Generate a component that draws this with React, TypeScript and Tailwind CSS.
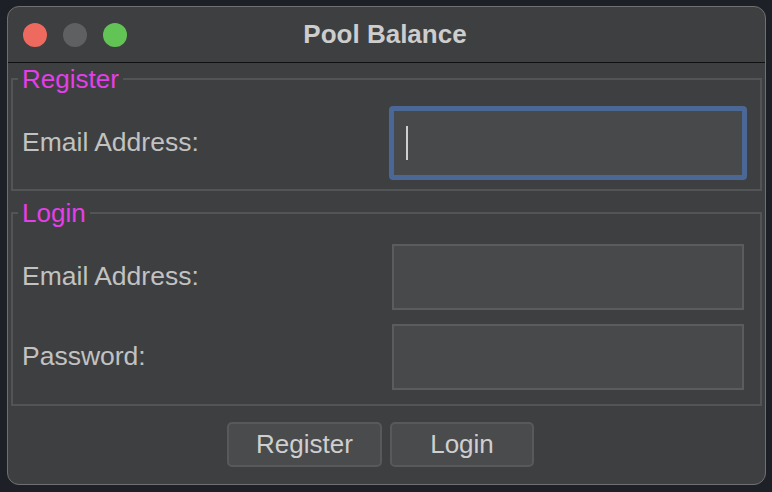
import React from 'react';

const font = { fontFamily: '"Liberation Sans", Arial, sans-serif' };

function TrafficLights() {
    return (
        <div className="flex items-center gap-[16px] pl-[15px]">
            <span className="block h-[24px] w-[24px] rounded-full bg-[#ee6a5e]" />
            <span className="block h-[24px] w-[24px] rounded-full bg-[#5f6062]" />
            <span className="block h-[24px] w-[24px] rounded-full bg-[#62c454]" />
        </div>
    );
}

function Field({ focused = false }: { focused?: boolean }) {
    if (focused) {
        return (
            <div className="flex h-[74px] w-[358px] items-center rounded-[4px] border-[5px] border-[#4a6795] bg-[#48494b] pl-[12px]">
                <span className="block h-[34px] w-[2px] bg-[#cfcfcf]" />
            </div>
        );
    }
    return <div className="h-[66px] w-[352px] border-2 border-[#5b5c5e] bg-[#48494b]" />;
}

export default function App() {
    return (
        <div className="h-[492px] w-[772px] bg-[#1d2026] pl-[7px] pt-[6px]" style={font}>
            <div className="flex h-[479px] w-[759px] flex-col overflow-hidden rounded-[12px] border border-[#707072] bg-[#3e3f41]">
                {/* title bar */}
                <div className="relative flex h-[56px] shrink-0 items-center border-b border-[#101010]">
                    <TrafficLights />
                    <div className="absolute inset-0 flex items-center justify-center pr-[3px] text-[26px] font-bold text-[#cdcdcd]">
                        Pool Balance
                    </div>
                </div>

                <div className="flex flex-col px-[3px] pt-[3px]">
                    <fieldset className="border-2 border-[#535456] pb-[9px] pl-[5px] pr-[13px] pt-[14px]">
                        <legend className="px-[4px] text-[26px] leading-[26px] text-[#e53ee8]">Register</legend>
                        <div className="flex items-center justify-between pl-[4px]">
                            <span className="text-[26.5px] text-[#c2c2c2]">Email Address:</span>
                            <Field focused />
                        </div>
                    </fieldset>

                    <fieldset className="mt-[9px] border-2 border-[#535456] pb-[14px] pl-[5px] pr-[16px] pt-[18px]">
                        <legend className="px-[4px] text-[26px] leading-[26px] text-[#e53ee8]">Login</legend>
                        <div className="flex flex-col gap-[14px]">
                            <div className="flex items-center justify-between pl-[4px]">
                                <span className="text-[26.5px] text-[#c2c2c2]">Email Address:</span>
                                <Field />
                            </div>
                            <div className="flex items-center justify-between pl-[4px]">
                                <span className="text-[26.5px] text-[#c2c2c2]">Password:</span>
                                <Field />
                            </div>
                        </div>
                    </fieldset>

                    <div className="mt-[16px] flex justify-center gap-[8px] pr-[12px]">
                        <button className="h-[45px] w-[155px] rounded-[5px] border-2 border-[#58595b] bg-[#4a4b4d] text-[26px] text-[#cfcfcf]">
                            Register
                        </button>
                        <button className="h-[45px] w-[144px] rounded-[5px] border-2 border-[#58595b] bg-[#4a4b4d] text-[26px] text-[#cfcfcf]">
                            Login
                        </button>
                    </div>
                </div>
            </div>
        </div>
    );
}
